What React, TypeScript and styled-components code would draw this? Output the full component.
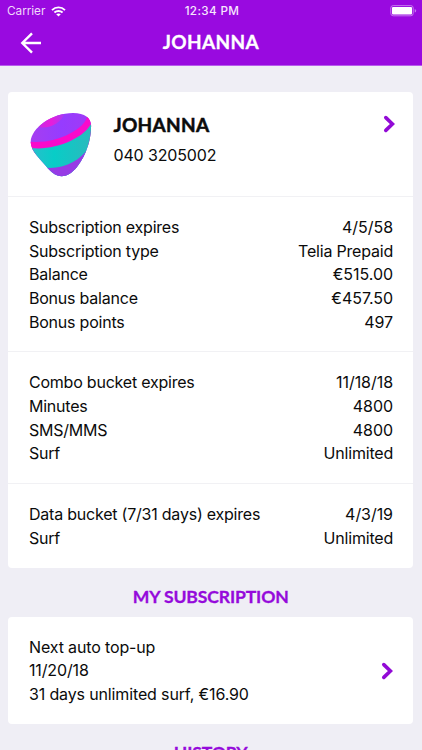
import React from 'react';
import styled, { createGlobalStyle } from 'styled-components';

const purple = '#950adb';

const GlobalStyle = createGlobalStyle`
  *, *::before, *::after { box-sizing: border-box; }
  html, body { margin: 0; height: 100%; overflow: hidden; background: #efeef5; }
`;

const Screen = styled.div`
  width: 100%;
  height: 750px;
  overflow: hidden;
  background: #efeef5;
  color: #0b0b0b;
  font-family: Inter, 'Liberation Sans', sans-serif;
  font-size: 16px;
`;

const Header = styled.header`
  height: 66px;
  background: #990ae0;
  color: #fff;
  border-bottom: 1px solid #b75cec;
`;

const StatusBar = styled.div`
  display: grid;
  grid-template-columns: 1fr auto 1fr;
  align-items: center;
  height: 22px;
  padding: 0 5px 0 7px;
  line-height: 22px;
`;

const Carrier = styled.div`
  display: flex;
  align-items: center;
  gap: 5.5px;
  font-size: 11.8px;
  color: #f0d8fb;
  letter-spacing: -0.05px;
`;

const Clock = styled.div`
  font-weight: 500;
  font-size: 11.7px;
  letter-spacing: 0.35px;
  color: #f6e6fd;
`;

const BatteryIcon = styled.svg`
  justify-self: end;
  display: block;
`;

const NavBar = styled.div`
  display: grid;
  grid-template-columns: 1fr auto 1fr;
  align-items: center;
  height: 41px;
  padding: 0 20px;
`;

const Heading = styled.h2<{ $size: number; $spacing: number }>`
  margin: 0;
  font-family: Lato, sans-serif;
  font-weight: 700;
  font-size: ${(p) => p.$size}px;
  letter-spacing: ${(p) => p.$spacing}px;
  line-height: 26px;
  -webkit-text-stroke: 0.5px currentColor;
`;

const NavTitle = styled(Heading)`
  padding-bottom: 2px;
  -webkit-text-stroke-width: 0.3px;
`;

const SectionTitle = styled(Heading)`
  padding: 16px 0 7px;
  color: ${purple};
  text-align: center;
  -webkit-text-stroke-width: 0.3px;
`;

const Content = styled.main`
  display: flex;
  flex-direction: column;
  padding: 25.6px 9px 0 8.4px;
`;

const Card = styled.section`
  background: #fff;
  border-radius: 4px;
`;

const Profile = styled.div`
  display: flex;
  align-items: flex-start;
  height: 104.4px;
  padding: 19px 17px 0 21.6px;
`;

const ProfileText = styled.div`
  flex: 1;
  padding: 1px 0 0 21.5px;
  line-height: 23.7px;
`;

const Phone = styled.div`
  margin-top: 6px;
  letter-spacing: -0.15px;
`;

const ChevronSlot = styled.div`
  padding-top: 4px;
`;

const Group = styled.div<{ $divided?: boolean }>`
  padding: 18.9px 20px 17.1px 20.6px;
  border-top: ${(p) => (p.$divided ? '1.5px solid #f1f1f4' : 'none')};
`;

const Row = styled.div`
  display: flex;
  justify-content: space-between;
  line-height: 23.7px;
`;

const Label = styled.span`
  letter-spacing: -0.22px;
`;

const Value = styled.span<{ $words: boolean }>`
  letter-spacing: ${(p) => (p.$words ? '-0.2px' : '-0.05px')};
`;

const TopUp = styled(Group)`
  display: flex;
  align-items: center;
  justify-content: space-between;
  padding-right: 19.4px;
  line-height: 23.7px;
  letter-spacing: -0.14px;
`;

const Chevron = () => (
  <svg width="13" height="18" viewBox="0 0 13 18" fill="none" stroke="#920ad6" strokeWidth="3.6" strokeLinecap="round" strokeLinejoin="miter">
    <path d="M2.8 2.6L9.4 9L2.8 15.4" />
  </svg>
);

const BackArrow = () => (
  <svg width="22" height="22" viewBox="0 0 22 22" fill="none" stroke="#fff" strokeWidth="2.4">
    <path d="M12 1.3L2.3 11L12 20.7M2.3 11H21" />
  </svg>
);

const Wifi = () => (
  <svg width="15" height="11" viewBox="0 0 15 11" fill="none" stroke="#fff" strokeWidth="1.9">
    <path d="M1 4.1C4.7 .5 10.3 .5 14 4.1M3.4 6.5C5.7 4.4 9.3 4.4 11.6 6.5" />
    <path d="M7.5 10.5L5.2 8.3C6.5 7.1 8.5 7.1 9.8 8.3Z" fill="#fff" stroke="none" />
  </svg>
);

const Battery = () => (
  <BatteryIcon width="27" height="12" viewBox="0 0 27 12">
    <rect x=".8" y=".6" width="22.4" height="10.2" rx="2.4" fill="none" stroke="#c577ef" />
    <rect x="2" y="1.9" width="20" height="7.6" rx="1" fill="#fff" />
    <path d="M24.7 3.9Q26.2 4.3 26.2 5.7T24.7 7.5Z" fill="#c577ef" />
  </BatteryIcon>
);

const Pebble = () => (
  <svg width="62" height="68" viewBox="30 110 62 68">
    <defs>
      <clipPath id="pebble">
        <path d="M30.7 141C31 127 52 112 73 112C85 112 91.2 117 91.1 125C91 138 87 153 77 166C67 178 57 178 48 167.500C41 159 30.5 150 30.7 141Z" />
      </clipPath>
      <linearGradient id="top" x1="0" y1="0" x2="1" y2="0">
        <stop offset="0" stopColor="#a63ef0" />
        <stop offset=".5" stopColor="#963cff" />
        <stop offset="1" stopColor="#a03af5" />
      </linearGradient>
      <linearGradient id="teal" x1="0" y1="0" x2="1" y2="0">
        <stop offset="0" stopColor="#2bbdcc" />
        <stop offset=".4" stopColor="#08cdc7" />
        <stop offset="1" stopColor="#2bb9bd" />
      </linearGradient>
      <linearGradient id="cap" x1="0" y1="0" x2="1" y2="0">
        <stop offset="0" stopColor="#c82be6" />
        <stop offset=".5" stopColor="#e71dda" />
        <stop offset="1" stopColor="#a73af5" />
      </linearGradient>
    </defs>
    <g clipPath="url(#pebble)">
      <rect x="30" y="110" width="62" height="68" fill="url(#top)" />
      <path d="M38 125C44 130 65 122 64.500 110L55 108L38 120Z" fill="url(#cap)" />
      <path d="M29 140.500C53 144 86 129 87.500 114L94 114V142L60 158L29 152Z" fill="#fa0acb" />
      <path d="M29 146.500C51 151 85 138 92 121V179H29Z" fill="url(#teal)" />
      <path d="M44 166.500C61 169 80 161 90 145V180H44Z" fill="#973be5" />
    </g>
  </svg>
);

const subscription = [
  ['Subscription expires', '4/5/58'],
  ['Subscription type', 'Telia Prepaid'],
  ['Balance', '€515.00'],
  ['Bonus balance', '€457.50'],
  ['Bonus points', '497'],
];

const combo = [
  ['Combo bucket expires', '11/18/18'],
  ['Minutes', '4800'],
  ['SMS/MMS', '4800'],
  ['Surf', 'Unlimited'],
];

const data = [
  ['Data bucket (7/31 days) expires', '4/3/19'],
  ['Surf', 'Unlimited'],
];

export default function App() {
  return (
    <Screen>
      <GlobalStyle />
      <Header>
        <StatusBar>
          <Carrier>
            <span>Carrier</span>
            <Wifi />
          </Carrier>
          <Clock>12:34 PM</Clock>
          <Battery />
        </StatusBar>
        <NavBar>
          <BackArrow />
          <NavTitle as="h1" $size={19} $spacing={0.35}>JOHANNA</NavTitle>
        </NavBar>
      </Header>
      <Content>
        <Card>
          <Profile>
            <Pebble />
            <ProfileText>
              <Heading $size={19} $spacing={0.3}>JOHANNA</Heading>
              <Phone>040 3205002</Phone>
            </ProfileText>
            <ChevronSlot>
              <Chevron />
            </ChevronSlot>
          </Profile>
          {[subscription, combo, data].map((rows, i) => (
            <Group key={i} $divided>
              {rows.map(([label, value]) => (
                <Row key={label}>
                  <Label>{label}</Label>
                  <Value $words={/[a-z]/.test(value)}>{value}</Value>
                </Row>
              ))}
            </Group>
          ))}
        </Card>
        <SectionTitle $size={17.6} $spacing={-0.15}>MY SUBSCRIPTION</SectionTitle>
        <Card>
          <TopUp>
            <div>
              <div>Next auto top-up</div>
              <div>11/20/18</div>
              <div>31 days unlimited surf, €16.90</div>
            </div>
            <Chevron />
          </TopUp>
        </Card>
        <SectionTitle $size={17.6} $spacing={-0.15}>HISTORY</SectionTitle>
      </Content>
    </Screen>
  );
}
